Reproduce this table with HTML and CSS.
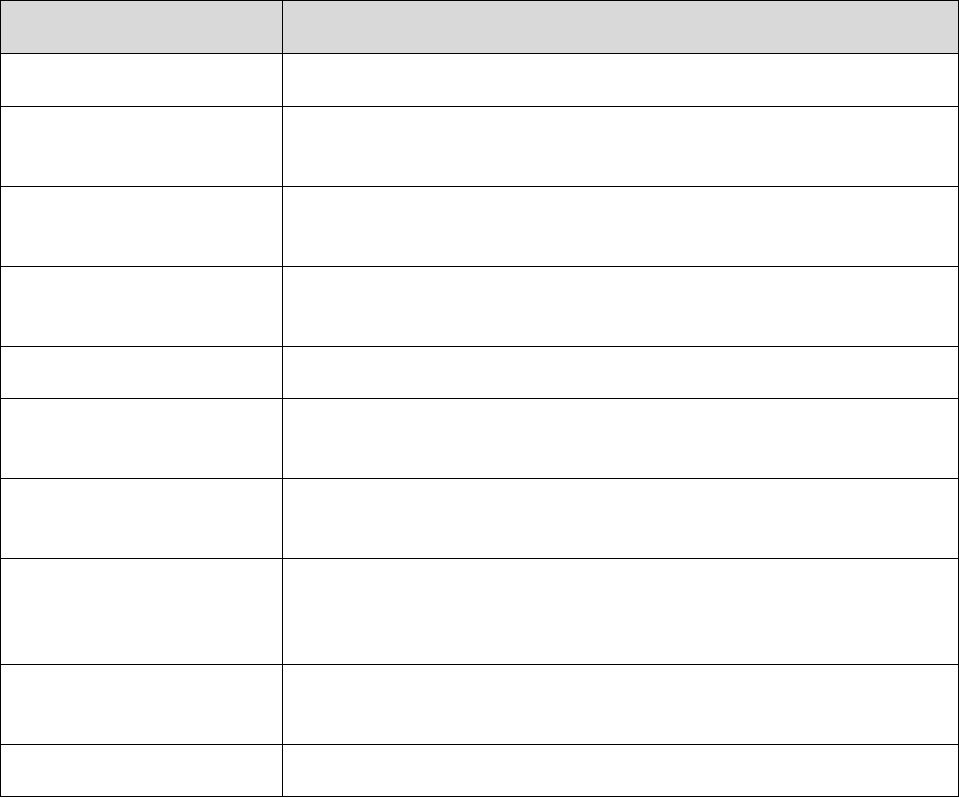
FILE: index.html
```html
<!DOCTYPE html>
<html>
<head>
<meta charset="utf-8">
<link rel="stylesheet" href="styles.css">
</head>
<body>
<table class="grid">
  <colgroup><col class="c1"><col class="c2"></colgroup>
  <thead>
    <tr class="h53 head"><th></th><th></th></tr>
  </thead>
  <tbody>
    <tr class="h53"><td></td><td></td></tr>
    <tr class="h80"><td></td><td></td></tr>
    <tr class="h80"><td></td><td></td></tr>
    <tr class="h80"><td></td><td></td></tr>
    <tr class="h52"><td></td><td></td></tr>
    <tr class="h80"><td></td><td></td></tr>
    <tr class="h80"><td></td><td></td></tr>
    <tr class="h106"><td></td><td></td></tr>
    <tr class="h80"><td></td><td></td></tr>
    <tr class="h52"><td></td><td></td></tr>
  </tbody>
</table>
</body>
</html>
```

FILE: styles.css
```css
html, body {
  margin: 0;
  padding: 0;
  background: #fff;
  font-family: "Liberation Sans", Arial, sans-serif;
}
.grid {
  border-collapse: collapse;
  width: 959px;
  table-layout: fixed;
}
.c1 { width: 282px; }
.grid th, .grid td {
  border: 1px solid #000;
  padding: 0;
}
.head th { background: #d9d9d9; }
.h53 { height: 53px; }
.h52 { height: 52px; }
.h80 { height: 80px; }
.h106 { height: 106px; }
```
